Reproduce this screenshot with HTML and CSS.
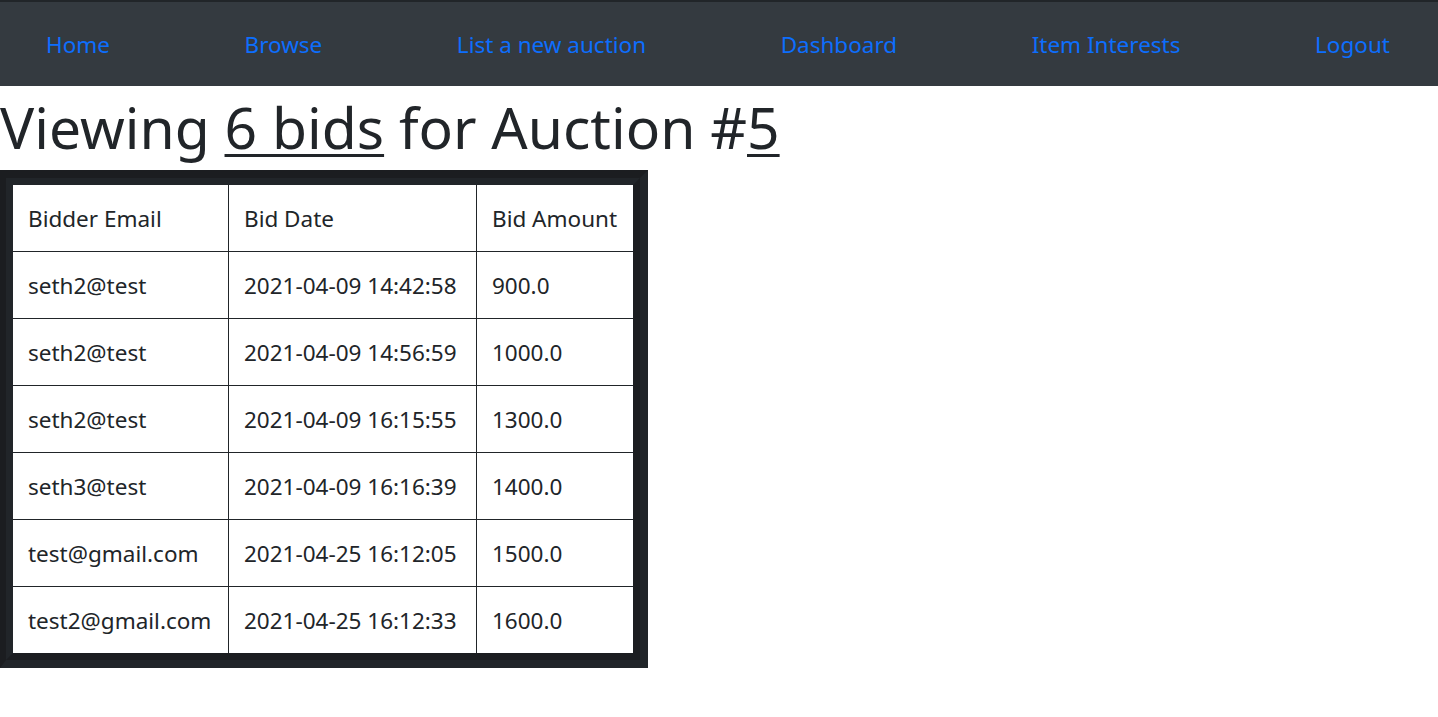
FILE: index.html
```html
<!DOCTYPE html>
<html lang="en">
<head>
<meta charset="utf-8">
<title>Bids for Auction #5</title>
<link rel="stylesheet" href="styles.css">
</head>
<body>
<nav class="navbar">
  <a href="#">Home</a>
  <a href="#">Browse</a>
  <a href="#">List a new auction</a>
  <a href="#">Dashboard</a>
  <a href="#">Item Interests</a>
  <a href="#">Logout</a>
</nav>
<h1 class="title">Viewing <a href="#">6 bids</a> for Auction #<a href="#">5</a></h1>
<div class="table-frame">
<table class="bids">
  <thead>
    <tr><th class="c1">Bidder Email</th><th class="c2">Bid Date</th><th class="c3">Bid Amount</th></tr>
  </thead>
  <tbody>
    <tr><td>seth2@test</td><td>2021-04-09 14:42:58</td><td>900.0</td></tr>
    <tr><td>seth2@test</td><td>2021-04-09 14:56:59</td><td>1000.0</td></tr>
    <tr><td>seth2@test</td><td>2021-04-09 16:15:55</td><td>1300.0</td></tr>
    <tr><td>seth3@test</td><td>2021-04-09 16:16:39</td><td>1400.0</td></tr>
    <tr><td>test@gmail.com</td><td>2021-04-25 16:12:05</td><td>1500.0</td></tr>
    <tr><td>test2@gmail.com</td><td>2021-04-25 16:12:33</td><td>1600.0</td></tr>
  </tbody>
</table>
</div>
</body>
</html>
```
FILE: styles.css
```css
html, body {
  margin: 0;
  padding: 0;
  background: #ffffff;
  color: #212529;
  font-family: "Noto Sans", "Open Sans", sans-serif;
}

.navbar {
  display: flex;
  justify-content: space-between;
  align-items: center;
  height: 84px;
  padding: 0 48px 0 46px;
  background: #343a40;
  border-top: 2px solid #212529;
}

.navbar a {
  color: #0d6efd;
  text-decoration: none;
  font-size: 22.5px;
  line-height: 1;
  padding-top: 2px;
}

.title {
  margin: 0;
  font-size: 57px;
  font-weight: 400;
  line-height: 82px;
  height: 84px;
  color: #212529;
}

.title a {
  color: #212529;
  text-decoration: underline;
  text-decoration-thickness: 3px;
  text-underline-offset: 5px;
}

.table-frame {
  display: inline-block;
  border-style: solid;
  border-width: 8px 8px 8px 6px;
  border-color: #1b1d20 #212529 #212529 #1b1d20;
}

.bids {
  border-collapse: separate;
  border-spacing: 0;
  border-style: solid;
  border-width: 7px;
  border-color: #212529 #1b1d20 #1b1d20 #212529;
  background: #fff;
  font-size: 22.5px;
}

.bids th,
.bids td {
  border-right: 1px solid #212529;
  border-bottom: 1px solid #212529;
  padding: 0 0 0 15px;
  height: 66px;
  text-align: left;
  font-weight: 400;
  white-space: nowrap;
  box-sizing: content-box;
}

.bids th:last-child,
.bids td:last-child {
  border-right: none;
}

.bids tbody tr:last-child td {
  border-bottom: none;
}

.bids .c1 { width: 200px; }
.bids .c2 { width: 232px; }
.bids .c3 { width: 141px; }
```
